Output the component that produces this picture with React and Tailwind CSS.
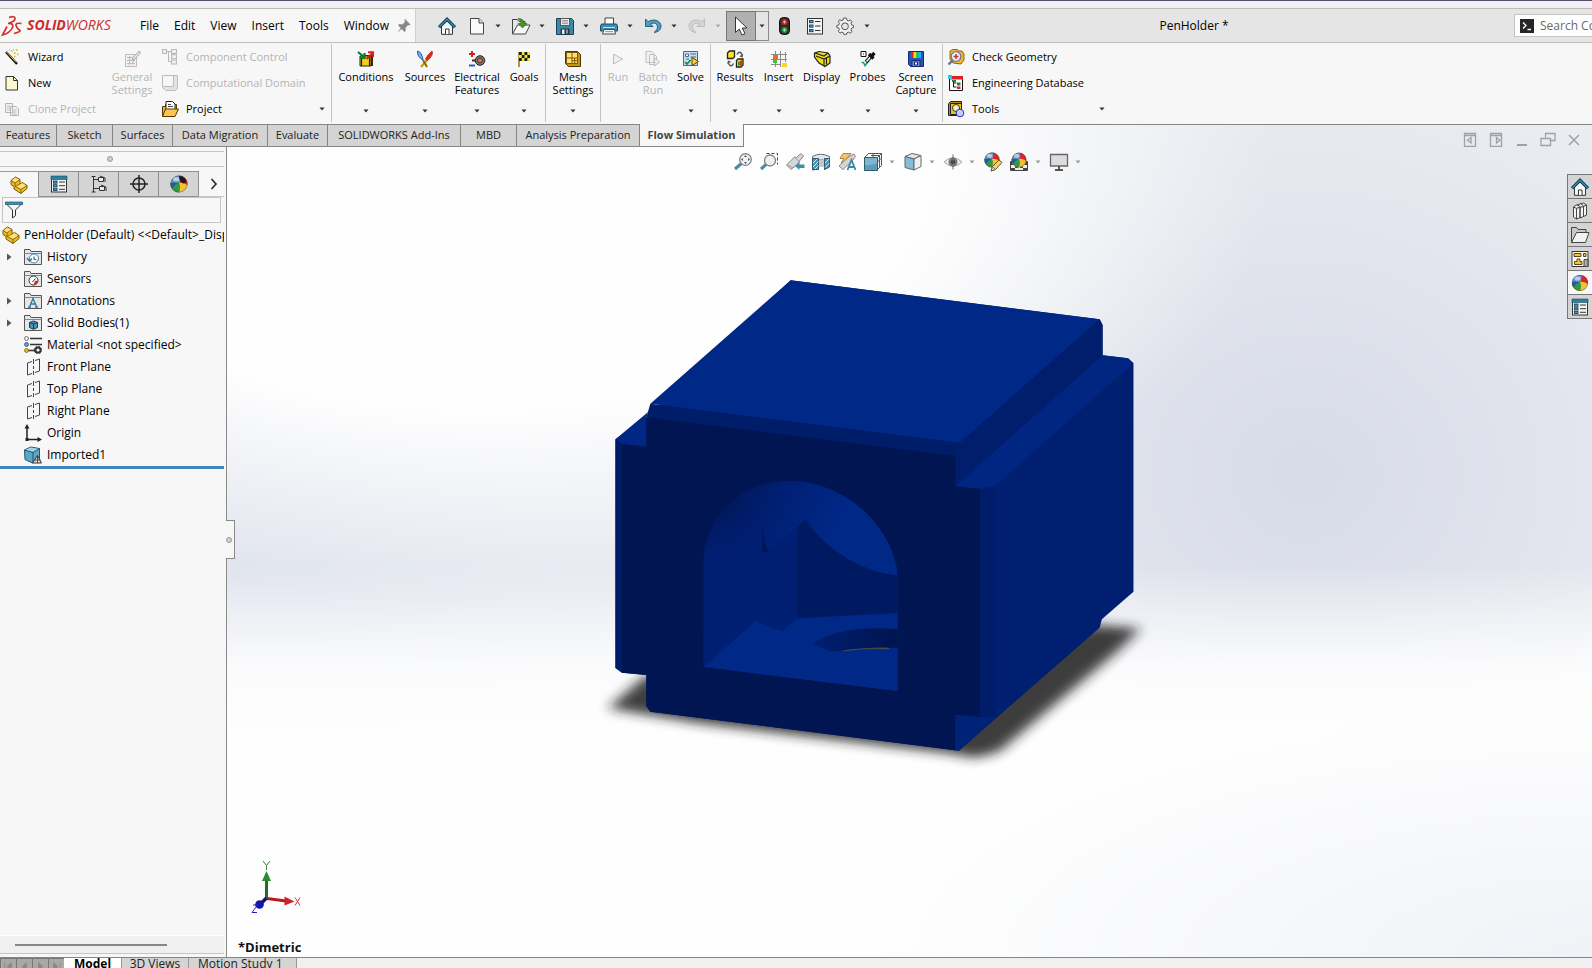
import React from "react";

const Svg = ({ w = 18, h, box, children }) => (
  <svg
    width={w}
    height={h || w}
    viewBox={box || `0 0 ${w} ${h || w}`}
    fill="none"
    className="shrink-0"
    aria-hidden="true"
  >
    {children}
  </svg>
);

const Caret = ({ className = "text-[#333]" }) => (
  <svg width="6" height="4" viewBox="0 0 6 4" className={`shrink-0 ${className}`} aria-hidden="true">
    <path d="M0.5 0.5h5L3 3.5z" fill="currentColor" />
  </svg>
);

/* ---------- shared icons ---------- */

const HomeIcon = () => (
  <Svg>
    <path d="M3.5 9v8.300h11V9L9 4z" fill="#f8f8f8" stroke="#333" />
    <path d="M7.500 17v-5h3.500v5" stroke="#333" fill="#fff" />
    <path d="M1 10.200 9 2.300l8 7.900" stroke="#123c50" strokeWidth="3.200" />
    <path d="M1.400 9.800 9 2.400l7.600 7.400" stroke="#3f93b5" strokeWidth="1.200" />
  </Svg>
);

const ListIcon = ({ blue }) => (
  <Svg>
    <rect x="1.500" y="1.500" width="15" height="15.500" fill="#f5f5f5" stroke="#333" />
    {blue && <path d="M1 1h16v3.500H1z" fill="#2c7fa3" stroke="#1b4a60" strokeWidth=".6" />}
    <g stroke="#16405a" fill="#4f9fc4" strokeWidth=".9">
      <rect x="3.500" y={blue ? 6 : 3.500} width="3.500" height="2.200" />
      <rect x="3.500" y={blue ? 9.700 : 8} width="3.500" height="2.200" />
      <rect x="3.500" y={blue ? 13.300 : 12.500} width="3.500" height="2.200" />
    </g>
    <path
      d={blue ? "M9 7h6M9 10.700h6M9 14.300h6" : "M9 4.500h5.500M9 9h5.500M9 13.500h5.500"}
      stroke="#333"
    />
  </Svg>
);

const Ball = ({ x = 9, y = 9, r = 7.500 }) => (
  <g transform={`translate(${x} ${y}) scale(${r / 8})`}>
    <circle r="8" fill="#f2c230" />
    <path d="M0-1Q2-5 1-8A8 8 0 0 1 8 1Q3-2 0-1z" fill="#d9252c" />
    <path d="M0-1Q2-5 1-8A8 8 0 0 0-8-1Q-4-2 0-1z" fill="#5f93d8" />
    <path d="M0-1Q-5-2-8-1A8 8 0 0 0 0 8Q2 3 0-1z" fill="#2f9a42" />
    <path d="M0-1Q-5-2-8-1A8 8 0 0 0-6.500 4.500Q-4 0 0-1z" fill="#2456b5" />
    <circle r="7.700" stroke="#444" strokeOpacity=".6" strokeWidth=".7" />
    <ellipse cx="-2.500" cy="-4.500" rx="3" ry="2" fill="#fff" opacity=".55" />
  </g>
);

const PartIcon = () => (
  <Svg>
    <path d="M1 4.500 5.500 1 10 3.500V8l2.500-1.500L17 9.500v3L11 17.500 4 13v-2.500L1 8.500z" fill="#f0bd20" stroke="#7a5708" />
    <path d="M1.600 4.600 5.500 1.700 9.300 3.700 5 6.800zM6.200 10.300 12.500 7.200l3.800 2.400L11 13z" fill="#fbe27a" />
    <path d="m1 4.500 4 2.500v3.500l6 3 6-4M11 13.500v4M5 7l5-3.500M5 10.500 10 8" stroke="#7a5708" strokeWidth=".8" />
  </Svg>
);

/* ---------- quick access toolbar ---------- */

const PageIcon = () => (
  <Svg>
    <path d="M2.500 1.500h8.500l4.500 4.500v11h-13z" fill="#fafafa" stroke="#444" />
    <path d="M11 1.500V6h4.500" stroke="#444" fill="#ddd" />
  </Svg>
);
const OpenIcon = () => (
  <Svg w={20} h={18}>
    <path d="M1.500 17V2.500h5l1.500 2h6v4" fill="#e6e6e6" stroke="#444" />
    <path d="M1.500 17 6.500 8H19l-4.500 9z" fill="#fafafa" stroke="#444" />
    <path d="M7 1.500c4 0 6 1.500 6 5h3L11.500 11 7 6.500h3c0-2-1-3.500-3-5z" fill="#3f9a1d" stroke="#256b0c" strokeWidth=".6" />
  </Svg>
);
const SaveIcon = () => (
  <Svg>
    <path d="M.5 1.500h15l2 2v14H.5z" fill="#3d87a8" stroke="#1c3f52" />
    <path d="M4.500 1.500h9v7h-9z" fill="#eee" stroke="#444" strokeWidth=".8" />
    <path d="M6 3.500h6M6 5h6M6 6.600h6" stroke="#888" strokeWidth=".8" />
    <path d="M4.500 11.500h9v6h-9z" fill="#2d3942" />
    <path d="M6 12.500h2.500v4.500H6z" fill="#e9e9e9" />
    <path d="M11 12.500v4" stroke="#9bb" strokeWidth="1.500" />
  </Svg>
);
const PrintIcon = () => (
  <Svg>
    <path d="M5 1h8.500v7H5z" fill="#fff" stroke="#444" />
    <path d="M1.500 7h15l1 2v5H.5V9z" fill="#3f8db0" stroke="#1d4a60" />
    <path d="M3 10.500h12" stroke="#bfe0ee" />
    <path d="M4 12.500h10.500l1 4.500h-13z" fill="#fff" stroke="#444" />
    <path d="M5 14.700h8" stroke="#888" />
  </Svg>
);
const UndoIcon = ({ gray }) => (
  <Svg>
    <g transform={gray ? "translate(18 0) scale(-1 1)" : undefined}>
      <path
        d="M1.500 2v7.500H9L6.500 7C10 5 13.500 6.500 13.500 10c0 2-1 3.500-3.500 5.500 4.500-.5 7-3 7-6.500C17 4 10 1 4.200 4.700z"
        fill={gray ? "#d4d4d4" : "#4d9dc4"}
        stroke={gray ? "#b9b9b9" : "#1d5573"}
        strokeWidth=".9"
      />
    </g>
  </Svg>
);
const CursorIcon = () => (
  <Svg w={14} h={20}>
    <path d="M1.500 1v15.500l3.700-3.400L8 19l3-1.300-2.700-5.700H13z" fill="#fff" stroke="#333" />
  </Svg>
);
const LightIcon = () => (
  <Svg w={12} h={18}>
    <rect x=".5" y=".5" width="10" height="17" rx="4" fill="#2d2d2d" stroke="#111" />
    <circle cx="5.500" cy="5" r="3" fill="#c8281e" />
    <circle cx="5.500" cy="13" r="3" fill="#2f8f38" />
    <path d="M5.500 3.500v3M4 5h3" stroke="#f7b7ae" />
    <path d="M5.500 11.500v3M4 13h3" stroke="#b4e6b8" />
  </Svg>
);
const GearIcon = () => (
  <Svg>
    <path
      d="m9 1 1.500.2.500 2 1.500.7 1.900-1 1.600 1.700-1 1.800.6 1.500 2 .6v2l-2 .6-.6 1.500 1 1.900-1.700 1.600-1.800-1-1.500.6-.6 2H8l-.6-2-1.500-.6-1.900 1-1.600-1.700 1-1.800-.6-1.500-2-.6v-2l2-.6.6-1.500-1-1.900L3.700 2.700l1.800 1L7 3.100l.5-2z"
      fill="#efefef"
      stroke="#555"
    />
    <circle cx="9" cy="9.300" r="3.400" fill="#e5e5e5" stroke="#555" />
  </Svg>
);

/* ---------- ribbon icons ---------- */

const WizardIcon = () => (
  <Svg w={16}>
    <path d="M2 3 13 15" stroke="#111" strokeWidth="2.400" />
    <path d="M2.500 3 12 13.300" stroke="#f0e37a" strokeWidth=".8" />
    <path d="M7 2h1.500M10 4h1.500M12 1h1.500M13 5.500h1.500M9 .5h1M10 7.500h1.500M5 1h1" stroke="#d8b51d" strokeWidth="1.500" />
  </Svg>
);
const NewIcon = () => (
  <Svg w={16}>
    <path d="M2 1.500h7.500L13.500 5.500v9.500H2z" fill="#fbf9cf" stroke="#333" />
    <path d="M9.500 1.500v4h4" stroke="#333" />
  </Svg>
);
const CloneIcon = () => (
  <Svg w={16}>
    <path d="M1.500 2.500h7v9h-7zM6.500 5.500H12l2.500 2.500v6.500h-8z" fill="#f2f2f2" stroke="#b5b5b5" />
    <path d="M3 5h3M3 7h3M3 9h3M8 9h4.500M8 11h4.500M8 13h4.500" stroke="#c0c0c0" />
  </Svg>
);
const SettingsGray = () => (
  <Svg w={18}>
    <path d="M2.500 4.500h11v12h-11z" fill="#f2f2f2" stroke="#bcbcbc" />
    <path d="M4 7.500h7M4 10.500h8M4 13.500h8M6.500 6v9M10 8v7" stroke="#bcbcbc" />
    <path d="m9 10 1-3 6-6 2 1.500-6 6.500z" fill="#ddd" stroke="#b0b0b0" />
  </Svg>
);
const CompIcon = () => (
  <Svg w={18}>
    <g fill="#efefef" stroke="#b8b8b8">
      <path d="M5 3.500h5M7.500 3.500v10H10" />
      <rect x="1.500" y="1.500" width="4" height="4" />
      <rect x="10.500" y="1.500" width="5" height="4" />
      <rect x="10.500" y="6.700" width="5" height="4" />
      <rect x="10.500" y="12" width="5" height="4" />
    </g>
  </Svg>
);
const DomainIcon = () => (
  <Svg w={18}>
    <path d="m1.500 1.500 3 0h12v12.500l-2 2.500h-10l-3-3z" fill="#e3e3e3" stroke="#bcbcbc" />
    <path d="M1.500 1.500h11v11h-11z" fill="#f7f7f7" stroke="#bcbcbc" />
  </Svg>
);
const ProjectIcon = () => (
  <Svg w={18}>
    <path d="M1.500 16.500v-10h3v-2h11v8" fill="#f0b436" stroke="#553a05" />
    <path d="M5 1.500h6.500l2.500 2.500v8H5z" fill="#fff" stroke="#222" />
    <path d="M7 4.500h3M7 6.500h5" stroke="#444" />
    <path d="M1.500 16.500 4.500 9h13l-3.500 7.500z" fill="#fbc64b" stroke="#553a05" />
  </Svg>
);
const ConditionsIcon = () => (
  <Svg w={18}>
    <path d="M4 5h12v11H4z" fill="#3a2d05" />
    <path d="M3 6h11v10H3z" fill="#f4cf18" stroke="#222" />
    <path d="M4.500 16V7M12.500 16V7" stroke="#222" strokeWidth="1.200" />
    <path d="m1 2 6 5M7.500 3v5H3" stroke="#0c7a28" strokeWidth="2.200" />
    <path d="m9.500 9 6-6M11 2.200h5V7" stroke="#dc2416" strokeWidth="2" />
  </Svg>
);
const SourcesIcon = () => (
  <Svg w={18}>
    <path d="m11 10-6 7" stroke="#c09a12" strokeWidth="2.200" />
    <path d="m7 10 4 7" stroke="#8a6b08" strokeWidth="2" />
    <path d="M1.500 1Q6 2 7 10 1 7 1.500 1z" fill="#69b2f2" stroke="#2262b4" />
    <path d="M16 1q2 4-4.500 9.500L9.500 9Q12 4 16 1z" fill="#e03010" stroke="#a1160a" strokeWidth=".7" />
  </Svg>
);
const ElectricalIcon = () => (
  <Svg w={18}>
    <path d="M1 4h6M4 1v6" stroke="#d2201a" strokeWidth="2" />
    <path d="M1 15.500h6" stroke="#2860b8" strokeWidth="2" />
    <path d="M4 10.500h8" stroke="#333" strokeWidth="2" />
    <circle cx="12" cy="10.500" r="4.800" fill="#777" stroke="#222" />
    <circle cx="12" cy="10.500" r="2.400" fill="#f07a28" stroke="#222" strokeWidth=".8" />
  </Svg>
);
const FlagIcon = () => (
  <Svg w={18}>
    <path d="M4 2v15" stroke="#8a7a20" strokeWidth="1.500" />
    <path d="M4 2h11v9H4z" fill="#f0e640" />
    <path d="M4 2h2.800v3H4zM9.500 2h2.800v3H9.500zM6.800 5h2.700v3H6.800zM12.300 5H15v3h-2.700zM4 8h2.800v3H4zM9.500 8h2.800v3H9.500z" fill="#1a1a1a" />
  </Svg>
);
const MeshIcon = () => (
  <Svg w={18}>
    <path d="M1.500 1.500h12l3 3v12h-12l-3-3z" fill="#c89512" stroke="#4d3704" />
    <path d="M2.500 2.500h11v11h-11z" fill="#ffe070" stroke="#7b5a0b" />
    <path d="M8 2.500v11M2.500 8h11M10.700 8v5.500M8 10.700h5.500" stroke="#7b5a0b" />
  </Svg>
);
const RunIcon = () => (
  <Svg w={18}>
    <path d="m4.500 4 9 5-9 5z" fill="#efefef" stroke="#bdbdbd" />
  </Svg>
);
const BatchIcon = () => (
  <Svg w={18}>
    <path d="M2 1.500h6l2 2v9H2zM5.500 4.500h5l2 2v8h-7z" fill="#f3f3f3" stroke="#bdbdbd" />
    <path d="m10.500 8 5 4-5 4z" fill="#eee" stroke="#bdbdbd" />
  </Svg>
);
const SolveIcon = () => (
  <Svg w={18}>
    <path d="M1.500 1.500h14v14h-14z" fill="#c7dcf0" stroke="#4a6a86" />
    <path d="M3.500 4h3v2.500h-3z" fill="#fff" stroke="#4a6a86" />
    <path d="M8.500 4h5.500M8.500 7h5.500M4 9h3" stroke="#4a6a86" />
    <path d="m3 12 2 2 3.500-4" stroke="#128a36" strokeWidth="1.600" />
    <path d="m10 7.500 6.500 4-6.500 4z" fill="#ffcf2a" stroke="#5d4506" />
  </Svg>
);
const ResultsIcon = () => (
  <Svg w={18}>
    <path d="M1.500 3 3.500 1h5v6l-2 1.500h-5z" fill="#ffe020" stroke="#222" strokeWidth="1.300" />
    <path d="M10.500 10.500 12 9h5v6l-2 2h-4.500z" fill="#ffe020" stroke="#222" strokeWidth="1.300" />
    <path d="M12 15.500v-4h2v4z" fill="#18a548" />
    <path d="M14 16v-5l2-1v5z" fill="#e2321f" />
    <path d="M11 4.500c2-4 4-2 5 0M14 6l2 .5.500-2.500M7.500 13.500c-2 4-4 2-5 0M4.500 12l-2-.5L2 14" stroke="#555" strokeWidth="1.500" />
  </Svg>
);
const InsertIcon = () => (
  <Svg w={18}>
    <path d="M5.500 1v16M10.500 1v16M15.500 2v10M1 4.500h16M1 9.500h16M1 14.500h10" stroke="#8a8a8a" />
    <rect x="3" y="5" width="5" height="4" fill="#f06b20" />
    <rect x="3" y="9" width="4" height="4" fill="#35c04a" />
    <rect x="12" y="13" width="5" height="4" fill="#f5d431" />
  </Svg>
);
const DisplayIcon = () => (
  <Svg w={18}>
    <path d="M1.500 3 6 1.500l9 1.500 2 3v7l-5 3.500-6-3.500-4.500-6z" fill="#f0dc1f" stroke="#222" strokeWidth="1.200" />
    <path d="m3 6 8 3 6-3M11 9v7M2 3l9 3 4-3M13.500 7.500v7" stroke="#222" strokeWidth="1.200" />
  </Svg>
);
const ProbesIcon = () => (
  <Svg w={18}>
    <path d="M2 1.500h5v5H2z" fill="#fff" stroke="#111" />
    <path d="M4 3.500h1v1H4z" fill="#111" />
    <path d="M2.500 12.500h2l1.500 3 4-5" stroke="#1a9a7a" strokeWidth="1.500" />
    <path d="m7 12 5-5.500" stroke="#111" strokeWidth="3.500" />
    <path d="m7.500 11.500 4-4.500" stroke="#fff" strokeWidth="1.500" />
    <path d="m10 4 4.500 4.500M12.500 6l3-3" stroke="#111" strokeWidth="3.200" />
  </Svg>
);
const CaptureIcon = () => (
  <Svg w={18}>
    <path d="M1.500 1.500h15v15h-13l-2-2z" fill="#2455b8" stroke="#152a70" />
    <path d="M4 2h2.500v6H4z" fill="#f02020" />
    <path d="M6.500 2H9v6H6.500z" fill="#f5e020" />
    <path d="M9 2h2.500v6H9z" fill="#25d040" />
    <path d="M11.500 2H14v6h-2.500z" fill="#28b0f5" />
    <path d="M5 10.500h8v6H5z" fill="#6f93dc" stroke="#152a70" />
    <path d="M7.500 12h3v3h-3z" fill="#fff" stroke="#152a70" />
  </Svg>
);
const CheckGeoIcon = () => (
  <Svg w={18}>
    <path d="M3 3 6 1.500h4L12 3h3l2 3v6l-3 4-8-1-3-4z" fill="#f3b431" stroke="#96640e" />
    <circle cx="9" cy="8.500" r="4.800" fill="#e6eef7" stroke="#6d7d91" strokeWidth="1.300" />
    <path d="M9 6v5M6.500 8.500h5" stroke="#d03030" strokeWidth="1.500" />
    <path d="m5.500 12.500-4 4" stroke="#4a78b0" strokeWidth="2.400" />
  </Svg>
);
const DatabaseIcon = () => (
  <Svg w={18}>
    <path d="M2.500 2.500h13v14h-13z" fill="#fff" stroke="#111" />
    <path d="M3 2h13v3.500H3z" fill="#e02020" />
    <path d="M1 1h4v4H1z" fill="#28c8e8" />
    <path d="M6.500 6v7h3M6.500 9h3" stroke="#111" />
    <path d="M5 6h4v2H5zM10 8.500h3.500v3H10z" fill="#188a30" />
    <path d="M10 12.500h3.500V15H10z" fill="#e02020" />
  </Svg>
);
const ToolsIcon = () => (
  <Svg w={18}>
    <path d="m1.500 4 2-2.500h11v11l-2 3h-11z" fill="#c08c10" stroke="#222" />
    <path d="M3.500 3.500h11v11h-11z" fill="#efc21c" stroke="#222" />
    <circle cx="9" cy="8" r="3.500" fill="#f8f0c0" stroke="#333" />
    <circle cx="13" cy="13" r="3.800" fill="#c5cdf8" stroke="#2630c8" />
  </Svg>
);

/* ---------- heads-up view icons ---------- */

const Lens = ({ cx, cy, r }) => (
  <>
    <path d={`M${cx - r * 0.7} ${cy + r * 0.7} 2 17`} stroke="#4c8aa8" strokeWidth="3.200" />
    <circle cx={cx} cy={cy} r={r} fill="#eef1f3" stroke="#7b8287" strokeWidth="1.300" />
  </>
);
const ZoomFit = () => (
  <Svg w={20}>
    <Lens cx={12.500} cy={7.500} r={5.800} />
    <path d="m12.500 3 1.500 2h-3zM12.500 12l1.500-2h-3zM8 7.500l2-1.500v3zM17 7.500 15 6v3z" fill="#555" />
  </Svg>
);
const ZoomArea = () => (
  <Svg w={20}>
    <path d="M7.500 1.500h11v11" stroke="#444" strokeDasharray="3 2" />
    <Lens cx={11} cy={8.500} r={5.500} />
  </Svg>
);
const PrevView = () => (
  <Svg w={20}>
    <path d="m1.500 13 8-8 2 .5L16 1.500 18.500 4l-4 5-.5 2-8 6.500z" fill="#d5d7d8" stroke="#858585" />
    <path d="m3 13 5 3M9.500 5l5 5" stroke="#999" />
    <path d="m10 14 4.500-4v2.500h5v3.500h-5v2z" fill="#3f8db0" />
  </Svg>
);
const SectionIcon = () => (
  <Svg w={20}>
    <path d="M1.500 4.500Q9 0 18.500 4.500v10l-5 3V8.500Q10 6.500 7.500 8v9l-6 1z" fill="#e4e6e7" stroke="#667" />
    <path d="M7.500 8v8q3-2 6-.5v-7Q10 6.500 7.500 8z" fill="#c3c7c9" />
    <path d="M1.500 6.500h6v11h-6zM13.500 6.500h5v8.500l-5 2.500z" fill="#4f93b5" stroke="#2f5b70" />
    <path d="m2 11 4-4M2 15l5.500-5.500M4 17l3.500-3.500M14 11l4-4M14 15.500l4.500-4.500" stroke="#cfe5ef" />
  </Svg>
);
const DynIcon = () => (
  <Svg w={20}>
    <path d="M6 1.500h8L9 7h2l-7 4 3-4.500H3z" fill="#f8c265" stroke="#a8701e" strokeWidth=".8" />
    <path d="m2 14 10-9.500L17 2l1.500 2.500L15 9l-9 8.500z" fill="#d5d5d5" stroke="#888" />
    <path d="m10.500 18 4-10 4 10M12 15h5" stroke="#3f86a8" strokeWidth="1.800" />
  </Svg>
);
const ViewIcon = () => (
  <Svg w={20}>
    <path d="M5.500 1.500h13v12l-4 4" stroke="#555" />
    <path d="M1.500 5.500 5.500 1.500M14.500 5.500l4-4M10 1.500v4M18.500 6l-4 4M8 3.500h8M16.500 4v11" stroke="#555" />
    <path d="M1.500 5.500h13v13h-13z" fill="#5d9cba" stroke="#2f5b70" />
    <path d="M2 6h12v5q-6 3-12 2z" fill="#8fc0d8" opacity=".7" />
  </Svg>
);
const CubeIcon = () => (
  <Svg w={20}>
    <path d="m2 4.500 7-3 9 2-7 3.500z" fill="#dce9ef" stroke="#666" />
    <path d="m2 4.500 9 2.500v11l-9-2.500z" fill="#86bcd4" stroke="#666" />
    <path d="m11 7 7-3.500v11L11 18z" fill="#eef2f4" stroke="#666" />
  </Svg>
);
const EyeIcon = () => (
  <Svg w={20}>
    <path d="M1 10Q10 1.500 19 10q-9 8.500-18 0z" fill="#ececec" stroke="#a5a5a5" />
    <circle cx="10" cy="10" r="4.500" fill="#777" />
    <circle cx="10" cy="10" r="2" fill="#333" />
    <path d="M10 2.500v15" stroke="#666" />
  </Svg>
);
const AppearIcon = () => (
  <Svg w={20}>
    <Ball x={9} y={8} r={7.500} />
    <path d="m8 19 1.500-4.500L16 8l3 2.500-6.500 7z" fill="#f3d173" stroke="#705218" />
    <path d="m8 19 1.500-4.500 3 3z" fill="#e8c8a0" stroke="#555" strokeWidth=".7" />
  </Svg>
);
const SceneIcon = () => (
  <Svg w={20}>
    <path d="M1.500 9.500h17v9h-17z" fill="#eee" stroke="#444" />
    <path d="M2 10h4v3H2zM6 13h3v3H6zM14 10h4v3h-4zM11 13h3v3h-3zM2 16h4v2.500H2zM14 16h4v2.500h-4z" fill="#444" />
    <Ball x={10} y={8} r={7.300} />
  </Svg>
);
const MonitorIcon = () => (
  <Svg w={20}>
    <path d="M1.500 2.500h17v11.500h-17z" fill="#dcdcdc" stroke="#666" strokeWidth="1.300" />
    <path d="M10 14v3.500M6 18h8" stroke="#555" strokeWidth="2" />
  </Svg>
);

/* ---------- tree icons ---------- */

const Folder = ({ children }) => (
  <Svg>
    <path d="M.5 16.500v-15h5.500l1 2h10.500v13z" fill="#e4e6e8" stroke="#555" />
    <path d="M.5 5.500h17" stroke="#888" />
    {children}
  </Svg>
);
const HistoryIcon = () => (
  <Folder>
    <circle cx="10" cy="10.500" r="4.500" fill="#fff" stroke="#3f7f9f" />
    <path d="M10 8.500v2.500l2.500 1M3 10l2.500 3L8 10.500" stroke="#2b6d90" strokeWidth="1.200" />
  </Folder>
);
const SensorIcon = () => (
  <Folder>
    <circle cx="9.500" cy="10.500" r="4.500" fill="#fff" stroke="#333" />
    <path d="m8.500 12 3-3.500" stroke="#333" />
    <path d="M9.500 15a4.500 4.500 0 0 0 4.500-4.500l-3 .5z" fill="#d22" />
  </Folder>
);
const AnnIcon = () => (
  <Folder>
    <path d="M5.500 15 9 6.500 12.800 15M6.800 12h4.700M4 15.200h3M11 15.200h3" stroke="#2f789c" strokeWidth="1.300" />
  </Folder>
);
const BodiesIcon = () => (
  <Folder>
    <path d="m5.500 8.500 4-1.500 4 1.500v5l-4 1.800-4-1.800z" fill="#4a93b5" stroke="#143e54" />
    <path d="m5.500 8.500 4 1.500 4-1.500M9.500 10v5" stroke="#143e54" />
  </Folder>
);
const MaterialIcon = () => (
  <Svg>
    <path d="M6 2.500h12M6 8.500h12M4 14.500h8" stroke="#333" strokeWidth="1.300" />
    <circle cx="2.500" cy="2.500" r="1.900" fill="#fff" stroke="#666" />
    <circle cx="2.500" cy="8.500" r="1.900" fill="#5fb0d8" stroke="#2b5d77" />
    <circle cx="2.500" cy="14.500" r="1.900" fill="#f2c230" stroke="#8a6a10" />
    <circle cx="14" cy="14" r="2.600" stroke="#333" strokeWidth="2" />
    <circle cx="14" cy="14" r="3.800" stroke="#333" strokeDasharray="1.500 1.500" />
  </Svg>
);
const PlaneIcon = () => (
  <Svg>
    <path d="M3.500 5 8 3.500M11 2.500l4.500-1.500v12L11 14.500M8 15.500l-4.500 1.500V5" stroke="#444" />
    <path d="M9.500 1v5M9.500 8v3M9.500 13v4" stroke="#444" />
  </Svg>
);
const OriginIcon = () => (
  <Svg>
    <path d="M3 3v12.500h13" stroke="#222" strokeWidth="1.500" />
    <path d="M3 0 .5 4.500h5zM18 15.500 13.500 13v5z" fill="#222" />
    <path d="M1.500 14h3v3h-3z" fill="#222" />
  </Svg>
);
const ImportedIcon = () => (
  <Svg>
    <path d="m.5 4 6-3 9 1.500v10l-7 4.500L1 13.500z" fill="#5ca6c8" stroke="#1d5573" />
    <path d="m.5 4 8.500 2.500 6.500-4M9 6.500V17" stroke="#1d5573" />
    <path d="m1.500 3.800 5-2.300 7.500 1.300L9 5.800z" fill="#a6d3e6" />
    <path d="m8.500 17 5-7.500 4 7.500z" fill="#ddd" stroke="#333" />
    <path d="M13.500 10v7M10.500 14h6" stroke="#333" strokeWidth=".8" />
  </Svg>
);

/* ---------- ribbon parts ---------- */

const RibbonRow = ({ icon, label, disabled, caret }) => (
  <button
    type="button"
    disabled={disabled}
    className={`flex h-[26px] items-center whitespace-nowrap text-left ${disabled ? "text-[#b4b4b4]" : "text-black"}`}
  >
    <span className="flex w-[18px] justify-center">{icon}</span>
    <span className="ml-[7px]">{label}</span>
    {caret && (
      <span className="ml-auto">
        <Caret />
      </span>
    )}
  </button>
);

const RibbonBig = ({ icon, lines, w, disabled, caret = true }) => (
  <button
    type="button"
    disabled={disabled}
    className={`flex shrink-0 flex-col items-center ${w} ${disabled ? "text-[#b4b4b4]" : "text-black"}`}
  >
    <span className="mt-[7px] flex h-[18px] items-center">{icon}</span>
    <span className="mt-[2px] flex h-[26px] flex-col whitespace-nowrap leading-[13px]">
      {lines.map((l) => (
        <span key={l}>{l}</span>
      ))}
    </span>
    {caret && <Caret className="mt-[13px] text-[#333]" />}
  </button>
);

const Rule = () => <div className="my-px h-[78px] w-px shrink-0 bg-[#c4c4c4]" />;

const tree = [
  { icon: <HistoryIcon />, label: "History", open: true },
  { icon: <SensorIcon />, label: "Sensors" },
  { icon: <AnnIcon />, label: "Annotations", open: true },
  { icon: <BodiesIcon />, label: "Solid Bodies(1)", open: true },
  { icon: <MaterialIcon />, label: "Material <not specified>" },
  { icon: <PlaneIcon />, label: "Front Plane" },
  { icon: <PlaneIcon />, label: "Top Plane" },
  { icon: <PlaneIcon />, label: "Right Plane" },
  { icon: <OriginIcon />, label: "Origin" },
  { icon: <ImportedIcon />, label: "Imported1" },
];

const tabs = [
  ["Features", "w-[57px]"],
  ["Sketch", "w-[56px]"],
  ["Surfaces", "w-[60px]"],
  ["Data Migration", "w-[95px]"],
  ["Evaluate", "w-[60px]"],
  ["SOLIDWORKS Add-Ins", "w-[133px]"],
  ["MBD", "w-[56px]"],
  ["Analysis Preparation", "w-[123px]"],
];

const Model = () => (
  <svg
    width="570"
    height="510"
    viewBox="0 0 1568 1530"
    preserveAspectRatio="none"
    className="absolute left-[363px] top-[113px] overflow-visible"
    role="img"
    aria-label="PenHolder model"
  >
    <defs>
      <filter id="soft" x="-20%" y="-20%" width="140%" height="140%">
        <feGaussianBlur stdDeviation="17" />
      </filter>
      <linearGradient id="vault" gradientUnits="userSpaceOnUse" x1="330" y1="770" x2="640" y2="900">
        <stop offset="0" stopColor="#001758" />
        <stop offset=".45" stopColor="#001f73" />
        <stop offset="1" stopColor="#002887" />
      </linearGradient>
      <linearGradient id="fade" gradientUnits="userSpaceOnUse" x1="0" y1="760" x2="0" y2="900">
        <stop offset="0" stopColor="#001f73" stopOpacity="0" />
        <stop offset="1" stopColor="#001f73" />
      </linearGradient>
      <linearGradient id="bore" x1="0" y1="0" x2="1" y2="0">
        <stop offset="0" stopColor="#001f72" />
        <stop offset="1" stopColor="#00144f" />
      </linearGradient>
      <clipPath id="arch">
        <path d="M312 1221V900C316 770 420 662 548 662C700 662 836 800 847 950V1293z" />
      </clipPath>
    </defs>
    <path d="M50 1345 155 1245 700 1300 1390 1095 1515 1105 1450 1175 1125 1475 1060 1494 985 1480 300 1390z" fill="#1c1c1c" opacity=".85" filter="url(#soft)" />
    <path d="M155 472 552 61 1402 178 1410 195V286L1480 295 1495 310V995L1408 1078 1402 1103 1015 1472 166 1355 155 1338V1245L88 1238 70 1224V538z" fill="#001f70" />
    <path d="m552 61 850 117-385 371-851-118z" fill="#002887" />
    <path d="m1402 178 8 17v93L1005 678v-90l12-39z" fill="#001e6c" />
    <path d="m166 431 851 118-12 39-850-116z" fill="#001d69" />
    <path d="M160 456 70 538l18 14 67 8v-88z" fill="#002783" />
    <path d="m70 538 18 14v686l-18-14z" fill="#001c66" />
    <path d="m155 472 850 116v90l68 8v685l-68-7v106l10 2-849-117-11-17v-93l-67-7V552l67 8z" fill="#001551" />
    <path d="m1410 286 70 9 15 15-383 370-39 6-68-8z" fill="#002682" />
    <path d="m1073 686 39-6v690l-39 1z" fill="#001d69" />
    <path d="m1005 1364 68 7 39-1-97 102-10-6z" fill="#002277" />
    <g clipPath="url(#arch)">
      <path d="M300 650h560v660H300z" fill="url(#vault)" />
      <path d="M300 760H474V876H490L571 800V1221H300z" fill="url(#fade)" />
      <path d="m490 875 102-96-21 21v280l-42 40z" fill="#001f72" />
      <path d="m571 800 21-21Q690 925 847 947v140l-276 20z" fill="#001a61" />
      <path d="m474 798 6 50 10 28h-16z" fill="#001551" />
      <path d="m312 1221 143-138 74 31 42-39 276-16v240z" fill="#002887" />
      <path d="M611 1152Q670 1104 800 1105L847 1107v56Q740 1163 665 1175z" fill="url(#bore)" />
      <path d="M696 1171q70-10 126-8l2 5q-60-4-126 6z" fill="#4a4844" />
    </g>
  </svg>
);

const headsUp = [
  [<ZoomFit />, "Zoom to Fit"],
  [<ZoomArea />, "Zoom to Area"],
  [<PrevView />, "Previous View"],
  [<SectionIcon />, "Section View"],
  [<DynIcon />, "Dynamic Annotation Views"],
  [<ViewIcon />, "View Orientation", true],
  [<CubeIcon />, "Display Style", true],
  [<EyeIcon />, "Hide/Show Items", true],
  [<AppearIcon />, "Edit Appearance"],
  [<SceneIcon />, "Apply Scene", true],
  [<MonitorIcon />, "View Settings", true],
];

const quick = [
  [<HomeIcon />, "Home", false, "w-[30px]"],
  [<PageIcon />, "New", true, "w-[44px]"],
  [<OpenIcon />, "Open", true, "w-[44px]"],
  [<SaveIcon />, "Save", true, "w-[44px]"],
  [<PrintIcon />, "Print", true, "w-[44px]"],
  [<UndoIcon />, "Undo", true, "w-[44px]"],
  [<UndoIcon gray />, "Redo", true, "w-[44px]"],
];

export default function App() {
  return (
    <div className="flex h-screen flex-col overflow-hidden bg-[#f7f7f7] font-['Open_Sans','Noto_Sans',sans-serif] text-xs text-black">
      <div className="h-[9px] shrink-0 border-b border-t border-b-[#bdbdbd] border-t-[#5a4c6c] bg-[#f1f0f3]" />

      {/* title bar */}
      <header className="flex h-[34px] shrink-0 items-stretch border-b border-[#bdbdbd] bg-[#e5e5e5]">
        <div className="flex w-[416px] shrink-0 items-center border-r border-[#cfcfcf] bg-[#f7f7f7]">
          <a href="#home" className="flex w-[124px] items-center text-[#cf2b2b]" aria-label="SOLIDWORKS">
            <svg width="22" height="22" viewBox="0 0 22 22" className="ml-px shrink-0" fill="none" stroke="#d0312d" strokeWidth="1.700" aria-hidden="true">
              <path d="M8 2.500Q14 .5 14 3.500T8 8" />
              <path d="M7 8.500Q13 8 11.500 12.500 9 18 1.500 20L6 11.500" />
              <path d="M20.500 8.500Q14 7.500 15 10.500T18.500 15 13 18.500" />
            </svg>
            <span className="ml-1 text-[14px] italic">
              <b className="font-bold">SOLID</b>WORKS
            </span>
          </a>
          <nav className="ml-4 flex flex-1 items-center gap-[15px]">
            {["File", "Edit", "View", "Insert", "Tools", "Window"].map((m) => (
              <button key={m} type="button">
                {m}
              </button>
            ))}
          </nav>
          <button type="button" aria-label="Pin menu" className="mr-1">
            <svg width="14" height="14" viewBox="0 0 14 14" fill="#888" aria-hidden="true">
              <path d="m8 0 5.500 5.500-1.500 1-1-.3-2.500 2.500.3 3L7.500 13 4.700 10 .5 13.500 3.700 9 1 6.300l1.500-1.200 3 .3L8 2.800 7.300 1z" />
            </svg>
          </button>
        </div>
        <div className="ml-4 flex items-center">
          {quick.map(([icon, name, caret, w]) => (
            <button key={name} type="button" aria-label={name} className={`flex h-full shrink-0 items-center ${w}`}>
              <span className="flex w-[30px] justify-center">{icon}</span>
              {caret && (
                <span className="ml-[3px]">
                  <Caret className={name === "Redo" ? "text-[#aaa]" : "text-[#333]"} />
                </span>
              )}
            </button>
          ))}
          <button type="button" aria-label="Select" className="flex h-[30px] w-[30px] items-center justify-center border border-[#777] bg-[#b0b0b0]">
            <CursorIcon />
          </button>
          <button type="button" aria-label="Select options" className="flex h-[30px] w-[13px] items-center justify-center border border-l-0 border-[#8a8a8a]">
            <Caret />
          </button>
          <button type="button" aria-label="Rebuild" className="ml-[10px]">
            <LightIcon />
          </button>
          <button type="button" aria-label="File properties" className="ml-[15px]">
            <ListIcon />
          </button>
          <button type="button" aria-label="Options" className="ml-3 flex items-center gap-[10px]">
            <GearIcon />
            <Caret />
          </button>
        </div>
        <div className="flex flex-1 items-center justify-center pl-1">PenHolder *</div>
        <label className="my-[5px] flex w-[78px] shrink-0 items-center overflow-hidden border border-r-0 border-[#c4c4c4] bg-white">
          <svg width="14" height="14" viewBox="0 0 14 14" className="ml-[5px] shrink-0" aria-hidden="true">
            <path d="M0 0h14v14H0z" fill="#262626" />
            <path d="m3 3.500 3 3-3 3M7.500 10.500H11" stroke="#fff" strokeWidth="1.300" fill="none" />
          </svg>
          <input
            aria-label="Search commands"
            placeholder="Search Commands"
            className="ml-[6px] w-32 shrink-0 bg-transparent outline-none placeholder:text-[#6a6a6a]"
          />
        </label>
      </header>

      {/* ribbon */}
      <div className="flex h-[81px] shrink-0 items-start text-[11px]">
        <div className="flex w-[331px] shrink-0">
          <div className="ml-[3px] mt-px flex w-[104px] flex-col">
            <RibbonRow icon={<WizardIcon />} label="Wizard" />
            <RibbonRow icon={<NewIcon />} label="New" />
            <RibbonRow icon={<CloneIcon />} label="Clone Project" disabled />
          </div>
          <RibbonBig icon={<SettingsGray />} lines={["General", "Settings"]} w="w-[50px]" disabled caret={false} />
          <div className="ml-1 mt-px flex w-[164px] flex-col">
            <RibbonRow icon={<CompIcon />} label="Component Control" disabled />
            <RibbonRow icon={<DomainIcon />} label="Computational Domain" disabled />
            <RibbonRow icon={<ProjectIcon />} label="Project" caret />
          </div>
        </div>
        <Rule />
        <div className="flex pl-px">
          <RibbonBig icon={<ConditionsIcon />} lines={["Conditions"]} w="w-[66px]" />
          <RibbonBig icon={<SourcesIcon />} lines={["Sources"]} w="w-[52px]" />
          <RibbonBig icon={<ElectricalIcon />} lines={["Electrical", "Features"]} w="w-[52px]" />
          <RibbonBig icon={<FlagIcon />} lines={["Goals"]} w="w-[42px]" />
        </div>
        <Rule />
        <RibbonBig icon={<MeshIcon />} lines={["Mesh", "Settings"]} w="w-[54px]" />
        <Rule />
        <RibbonBig icon={<RunIcon />} lines={["Run"]} w="w-[34px]" disabled caret={false} />
        <RibbonBig icon={<BatchIcon />} lines={["Batch", "Run"]} w="w-[36px]" disabled caret={false} />
        <RibbonBig icon={<SolveIcon />} lines={["Solve"]} w="w-[39px]" />
        <Rule />
        <RibbonBig icon={<ResultsIcon />} lines={["Results"]} w="w-[48px]" />
        <RibbonBig icon={<InsertIcon />} lines={["Insert"]} w="w-[39px]" />
        <RibbonBig icon={<DisplayIcon />} lines={["Display"]} w="w-[47px]" />
        <RibbonBig icon={<ProbesIcon />} lines={["Probes"]} w="w-[45px]" />
        <RibbonBig icon={<CaptureIcon />} lines={["Screen", "Capture"]} w="w-[52px]" />
        <Rule />
        <div className="ml-1 mt-px flex w-[158px] flex-col">
          <RibbonRow icon={<CheckGeoIcon />} label="Check Geometry" />
          <RibbonRow icon={<DatabaseIcon />} label="Engineering Database" />
          <RibbonRow icon={<ToolsIcon />} label="Tools" caret />
        </div>
      </div>

      {/* command tabs and work area share one backdrop */}
      <div className="relative flex min-h-0 flex-1 flex-col bg-[#e4e7f0] bg-[radial-gradient(ellipse_45%_30%_at_100%_100%,#f0f2f7_0%,transparent_100%),linear-gradient(to_bottom,transparent_53%,rgba(255,255,255,0.45)_59%,rgba(255,255,255,0.85)_65%,#fefefe_74%),radial-gradient(ellipse_50%_52%_at_30%_5%,#fefefe_0%,#fefefe_56%,transparent_100%),linear-gradient(to_right,#dfe3ed_0%,#dfe3ed_20%,transparent_60%),radial-gradient(ellipse_30%_52%_at_82%_42%,#d7dbe7_0%,#ebedf2_100%)]">
        <div className="flex h-[23px] shrink-0 items-stretch text-[11px]">
          {tabs.map(([t, w]) => (
            <button
              key={t}
              type="button"
              className={`shrink-0 whitespace-nowrap border-y border-r border-[#858585] bg-[#d4d4d4] text-center text-[#222] ${w}`}
            >
              {t}
            </button>
          ))}
          <button
            type="button"
            className="w-[104px] shrink-0 whitespace-nowrap border-b border-r border-[#858585] bg-[#f7f7f7] text-center font-bold text-[#444]"
          >
            Flow Simulation
          </button>
          <div className="flex flex-1 items-end justify-end border-t border-[#858585] pr-[10px]">
            <div className="flex gap-[10px]">
              {[
                ["Dock left", <path d="M2.500 2.500h11v13h-11zM2.500 4.500h11M9 6.500v5.500L5.500 9.200z" />],
                ["Dock right", <path d="M2.500 2.500h11v13h-11zM2.500 4.500h11M8.500 6.500v5.500L12 9.200z" />],
                ["Minimize", <path d="M3 14h10" strokeWidth="2" />],
                ["Restore", <path d="M5.500 6.500v-4h9.500v7h-4M1 7.500h9.500v7H1z" />],
                ["Close", <path d="m3 4 10 10M13 4 3 14" strokeWidth="1.500" />],
              ].map(([n, p]) => (
                <button key={n} type="button" aria-label={n}>
                  <svg width="16" height="16" viewBox="0 0 16 16" fill="none" stroke="#a0a1a6" strokeWidth="1.300" aria-hidden="true">
                    {p}
                  </svg>
                </button>
              ))}
            </div>
          </div>
        </div>

        <div className="flex min-h-0 flex-1">
          {/* feature manager */}
          <aside className="flex w-[227px] shrink-0 flex-col border-r border-[#8a8a8a] bg-[#f7f7f7] pr-[2px]">
            <div className="mt-1 flex h-4 items-center justify-center border-y border-[#c6c6c6] pr-1">
              <span className="h-[6px] w-[6px] rounded-full border border-[#999] bg-[#d0d0d0]" />
            </div>
            <div className="mt-1 flex h-[26px] shrink-0 items-stretch">
              <button type="button" aria-label="Feature tree" className="flex w-[38px] items-center justify-center border-t border-[#999]">
                <PartIcon />
              </button>
              {[
                ["Properties", <ListIcon blue />],
                [
                  "Configurations",
                  <Svg>
                    <path d="M3.500 1v16M3.500 4.500H9M3.500 13.500H9M1.500 1.500h4M1.500 17h4" stroke="#333" />
                    <path d="M8.500 2.500h5v4h-5zM9.500 11.500h5v4h-5z" fill="#eee" stroke="#333" />
                    <path d="m10 1 5 2v4M11 10l5 2v4" stroke="#333" />
                  </Svg>,
                ],
                [
                  "Dimensions",
                  <Svg>
                    <circle cx="9" cy="9" r="6" stroke="#222" strokeWidth="1.500" />
                    <path d="M9 0v18M0 9h18" stroke="#222" strokeWidth="1.500" />
                  </Svg>,
                ],
                [
                  "Appearances",
                  <Svg>
                    <Ball x={9} y={9} r={8.500} />
                    <path d="M9 1q4 0 6.500 3l1 3-3 1.500Q9 6.500 9 1z" fill="#1a1a1a" />
                  </Svg>,
                ],
              ].map(([n, icon]) => (
                <button key={n} type="button" aria-label={n} className="flex w-[40px] items-center justify-center border border-r-0 border-[#8f8f8f] bg-[#d4d4d4]">
                  {icon}
                </button>
              ))}
              <button type="button" aria-label="More" className="flex flex-1 items-center justify-center border-b border-l border-b-[#c6c6c6] border-l-[#8f8f8f] pl-1">
                <svg width="8" height="12" viewBox="0 0 8 12" fill="none" stroke="#333" strokeWidth="1.800" aria-hidden="true">
                  <path d="m1.500 1 4.500 5-4.500 5" />
                </svg>
              </button>
            </div>
            <label className="ml-[2px] mr-[3px] flex h-[26px] shrink-0 items-center border border-[#c6c6c6] pl-[2px]">
              <Svg>
                <path d="M.5 2 7.500 9v8l3-2.500V9l7-7z" fill="#f5f5f5" stroke="#333" />
                <path d="M.5 1h17v2.500H.5z" fill="#3f93b5" stroke="#1d5573" strokeWidth=".7" />
              </Svg>
              <input aria-label="Filter tree" className="min-w-0 flex-1 bg-transparent px-1 outline-none" />
            </label>
            <div className="mt-px flex h-[22px] shrink-0 items-center overflow-hidden whitespace-nowrap pl-[2px]">
              <PartIcon />
              <span className="ml-1">{"PenHolder (Default) <<Default>_Displ"}</span>
            </div>
            <ul className="border-b-[3px] border-[#3d87bb]">
              {tree.map((n) => (
                <li key={n.label} className="flex h-[22px] items-center whitespace-nowrap">
                  <span className="flex w-6 shrink-0 items-center pl-[7px]">
                    {n.open && (
                      <svg width="5" height="8" viewBox="0 0 5 8" aria-hidden="true">
                        <path d="M0 .5v7L4.500 4z" fill="#555" />
                      </svg>
                    )}
                  </span>
                  {n.icon}
                  <span className="ml-[5px]">{n.label}</span>
                </li>
              ))}
            </ul>
            <div className="mt-auto flex h-[18px] shrink-0 items-center border-t border-white bg-[#f0f0f0] pl-[15px]">
              <div className="h-[2px] w-[152px] bg-[#888]" />
            </div>
            <div className="h-1 shrink-0 border-t border-[#c6c6c6]" />
          </aside>

          {/* graphics area */}
          <main className="relative min-w-0 flex-1">
            <Model />
            <div className="flex justify-center pr-1 pt-[5px]">
              {headsUp.map(([icon, name, caret]) => (
                <button key={name} type="button" aria-label={name} className={`flex items-center pl-[3px] ${caret ? "w-10" : "w-[26px]"}`}>
                  {icon}
                  {caret && (
                    <span className="ml-[6px]">
                      <Caret className="text-[#999]" />
                    </span>
                  )}
                </button>
              ))}
            </div>

            <button
              type="button"
              aria-label="Collapse panel"
              className="absolute -left-px top-[373px] flex h-[39px] w-[9px] items-center border border-l-0 border-[#8a8a8a] bg-[#f7f7f7]"
            >
              <span className="h-[6px] w-[6px] rounded-full border border-[#999] bg-[#d0d0d0]" />
            </button>

            <div className="absolute right-0 top-[27px] flex w-[25px] flex-col border-l border-t border-[#777]">
              {[
                ["Resources", <HomeIcon />],
                [
                  "Design library",
                  <Svg>
                    <path d="m2.500 5 3 1.500v10.500l-3-2zM5.500 6.500 9 5v10.500L5.500 17M9 5.500V16l3.500-1.500V4.500zM12.500 4.500 15.500 3v10l-3 1.500M2.500 5l3.500-2.500L9 4.500M6 3.500 9.500 1.500l3 2.500M9.500 2l3-1 3 2" fill="#f4f4f4" stroke="#333" strokeWidth=".9" />
                  </Svg>,
                ],
                [
                  "File explorer",
                  <Svg w={20} h={18}>
                    <path d="M1.500 16.500v-15h5l1.500 2h8v4" fill="#c8c8c8" stroke="#444" />
                    <path d="m1.500 16.500 5-10H19l-3.500 10z" fill="#f2f2f2" stroke="#444" />
                  </Svg>,
                ],
                [
                  "View palette",
                  <Svg>
                    <path d="M1 1.500h16v15H1z" fill="#fff" stroke="#333" />
                    <path d="M3 3.500h7v3H3zM12.500 3.500H15v3h-2.500zM3.500 14.500v-3H6V9h3v2.500h2v3z" fill="#f3c62b" stroke="#4d3704" strokeWidth=".9" />
                    <path d="M13 9.500h4v7h-4z" fill="#aaa" stroke="#444" />
                  </Svg>,
                ],
                ["Appearances and scenes", <Svg><Ball x={9} y={9} r={8} /></Svg>, true],
                ["Custom properties", <ListIcon blue />],
              ].map(([n, icon, active]) => (
                <button
                  key={n}
                  type="button"
                  aria-label={n}
                  className={`flex h-6 items-center justify-center border-b border-[#777] ${active ? "bg-[#f7f7f7]" : "bg-[#d4d4d4]"}`}
                >
                  {icon}
                </button>
              ))}
            </div>

            <svg width="56" height="58" viewBox="0 0 56 58" className="absolute bottom-10 left-[21px]" fill="none" aria-hidden="true">
              <path d="m15 2 3.500 4.500L22 2M18.500 6.500V11" stroke="#2a8a2a" />
              <path d="M18.500 22v17" stroke="#1f6d26" strokeWidth="3" />
              <path d="m18.500 12-4.500 10h9z" fill="#2a8a2e" />
              <path d="M19 39.500 38 42" stroke="#b81c20" strokeWidth="3" />
              <path d="m36.500 37.500 10 5-10 4z" fill="#cf2428" />
              <path d="m47 38.500 5 8M52 38.500l-5 8" stroke="#d03030" />
              <path d="m18.500 39-6 6" stroke="#16166c" strokeWidth="3.500" />
              <circle cx="11.500" cy="45.500" r="4.300" fill="#1616a8" />
              <path d="M5 46h4.500L4 53.500h5" stroke="#2222c0" />
            </svg>
            <div className="absolute bottom-[2px] left-[11px] text-[13px] font-bold leading-4 text-[#111]">*Dimetric</div>
          </main>
        </div>
      </div>

      {/* document tabs */}
      <footer className="flex h-[11px] shrink-0 items-start overflow-hidden border-t border-[#858585] bg-[#f0f0f0]">
        {[
          ["First", "M4 4v8M11 4 6.500 8l4.500 4z"],
          ["Previous", "M10 4 5.500 8l4.500 4z"],
          ["Next", "M6 4l4.500 4L6 12z"],
          ["Last", "M5 4l4.500 4L5 12zM12 4v8"],
        ].map(([n, d]) => (
          <button key={n} type="button" aria-label={n} className="h-4 w-4 shrink-0 border-l border-t border-[#777] bg-[#a8a8a8]">
            <svg width="15" height="15" viewBox="0 0 16 16" fill="#8a8a8a" stroke="#8a8a8a" aria-hidden="true">
              <path d={d} />
            </svg>
          </button>
        ))}
        <button type="button" className="h-3 w-[57px] shrink-0 bg-white text-center font-bold leading-3">
          Model
        </button>
        <button type="button" className="h-3 w-[68px] shrink-0 border-x border-[#999] bg-[#d4d4d4] text-center leading-3 text-[#222]">
          3D Views
        </button>
        <button type="button" className="h-3 w-[108px] shrink-0 whitespace-nowrap border-r border-[#999] bg-[#d4d4d4] pl-[9px] text-left leading-3 text-[#222]">
          Motion Study 1
        </button>
      </footer>
    </div>
  );
}
